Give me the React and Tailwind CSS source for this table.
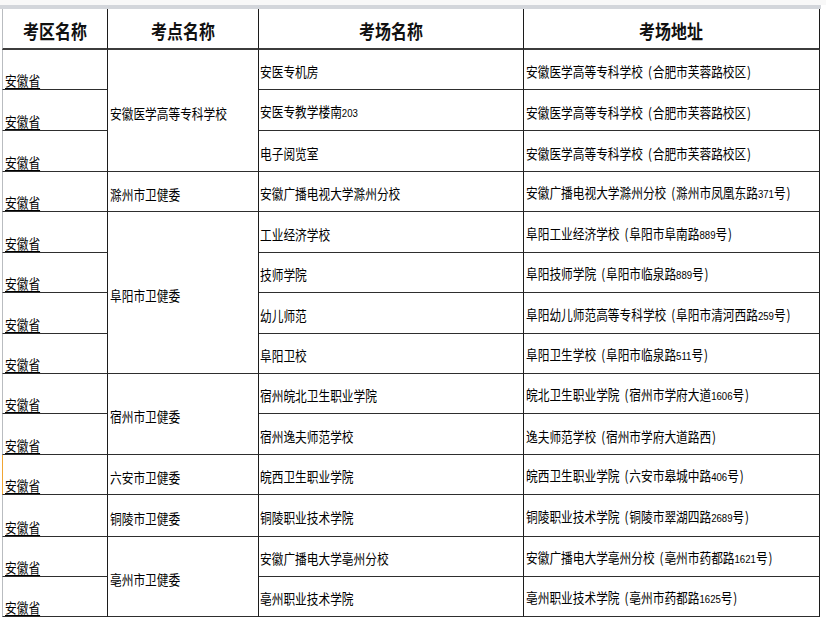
import React from "react";

function Txt({ s, extra = "" }) {
  const parts = s.split(/(\d+|[()])/).filter((p) => p.length > 0);
  return (
    <span className={"inline-block origin-left scale-x-[0.835] whitespace-nowrap " + extra}>
      {parts.map((p, i) => {
        if (/^\d+$/.test(p))
          return (
            <span key={i} className="text-[11.5px] [font-family:'Liberation_Sans',Arial,sans-serif]">
              {p}
            </span>
          );
        if (p === "(")
          return (
            <span key={i} className="ml-[6px] mr-[1px]">
              (
            </span>
          );
        if (p === ")")
          return (
            <span key={i} className="ml-[1px]">
              )
            </span>
          );
        return <span key={i}>{p}</span>;
      })}
    </span>
  );
}

const rowsMeta = [
  { c2: "安徽医学高等专科学校", span: 3, c3: "安医专机房", c4: "安徽医学高等专科学校(合肥市芙蓉路校区)" },
  { c3: "安医专教学楼南203", c4: "安徽医学高等专科学校(合肥市芙蓉路校区)" },
  { c3: "电子阅览室", c4: "安徽医学高等专科学校(合肥市芙蓉路校区)" },
  { c2: "滁州市卫健委", span: 1, c3: "安徽广播电视大学滁州分校", c4: "安徽广播电视大学滁州分校(滁州市凤凰东路371号)" },
  { c2: "阜阳市卫健委", span: 4, c3: "工业经济学校", c4: "阜阳工业经济学校(阜阳市阜南路889号)" },
  { c3: "技师学院", c4: "阜阳技师学院(阜阳市临泉路889号)" },
  { c3: "幼儿师范", c4: "阜阳幼儿师范高等专科学校(阜阳市清河西路259号)" },
  { c3: "阜阳卫校", c4: "阜阳卫生学校(阜阳市临泉路511号)" },
  { c2: "宿州市卫健委", span: 2, c3: "宿州皖北卫生职业学院", c4: "皖北卫生职业学院(宿州市学府大道1606号)" },
  { c3: "宿州逸夫师范学校", c4: "逸夫师范学校(宿州市学府大道路西)" },
  { c2: "六安市卫健委", span: 1, c3: "皖西卫生职业学院", c4: "皖西卫生职业学院(六安市皋城中路406号)", orange: true },
  { c2: "铜陵市卫健委", span: 1, c3: "铜陵职业技术学院", c4: "铜陵职业技术学院(铜陵市翠湖四路2689号)" },
  { c2: "亳州市卫健委", span: 2, c3: "安徽广播电大学亳州分校", c4: "安徽广播电大学亳州分校(亳州市药都路1621号)" },
  { c3: "亳州职业技术学院", c4: "亳州职业技术学院(亳州市药都路1625号)" },
];

const spanClass = {
  1: "row-span-1",
  2: "row-span-2",
  3: "row-span-3",
  4: "row-span-4",
};

function Header({ text, first }) {
  return (
    <div
      className={
        "flex items-center justify-center border-r border-r-[#1c1c1c] border-b-2 border-b-[#3c3c3c] " +
        (first ? "border-l border-l-[#b9bcc0]" : "")
      }
    >
      <span className="inline-block origin-center scale-x-[0.84] whitespace-nowrap text-[19px] font-bold leading-none text-[#111] pt-[3px]">
        {text}
      </span>
    </div>
  );
}

export default function App() {
  const cells = [];
  rowsMeta.forEach((r, i) => {
    cells.push(
      <div
        key={"a" + i}
        className={
          "flex items-end border-l border-r border-b border-r-[#1c1c1c] border-b-[#2e2e2e] pl-[2px] " +
          (r.orange ? "border-l-[#f0a534]" : "border-l-[#b9bcc0]")
        }
      >
        <Txt s="安徽省" extra="underline decoration-1 underline-offset-[2px] leading-[16px] pb-[1px]" />
      </div>
    );
    if (r.c2) {
      cells.push(
        <div
          key={"b" + i}
          className={
            "flex items-center border-r border-b border-r-[#1c1c1c] border-b-[#2e2e2e] pl-[2px] pt-[4px] " +
            spanClass[r.span]
          }
        >
          <Txt s={r.c2} />
        </div>
      );
    }
    cells.push(
      <div
        key={"c" + i}
        className="flex items-center border-r border-b border-r-[#1c1c1c] border-b-[#2e2e2e] pl-[1px] pt-[3px]"
      >
        <Txt s={r.c3} />
      </div>
    );
    cells.push(
      <div
        key={"d" + i}
        className="flex items-center border-r border-b border-r-[#1c1c1c] border-b-[#2e2e2e] pl-[2px] pt-[3px]"
      >
        <Txt s={r.c4} />
      </div>
    );
  });

  return (
    <div className="w-[826px] h-[618px] overflow-hidden bg-white text-[14px] leading-none text-black [font-family:'Noto_Sans_CJK_SC','Noto_Sans',sans-serif]">
      <div className="h-[5px] bg-[#f8f8f8]" />
      <div className="h-[4px] w-[821px] bg-[#d3d6db]" />
      <div className="ml-[2px] grid w-[818px] grid-cols-[106px_151px_265px_296px] grid-rows-[41px_40px_41px_41px_40px_41px_40px_41px_40px_40px_41px_40px_42px_40px_40px]">
        <Header text="考区名称" first />
        <Header text="考点名称" />
        <Header text="考场名称" />
        <Header text="考场地址" />
        {cells}
      </div>
    </div>
  );
}
